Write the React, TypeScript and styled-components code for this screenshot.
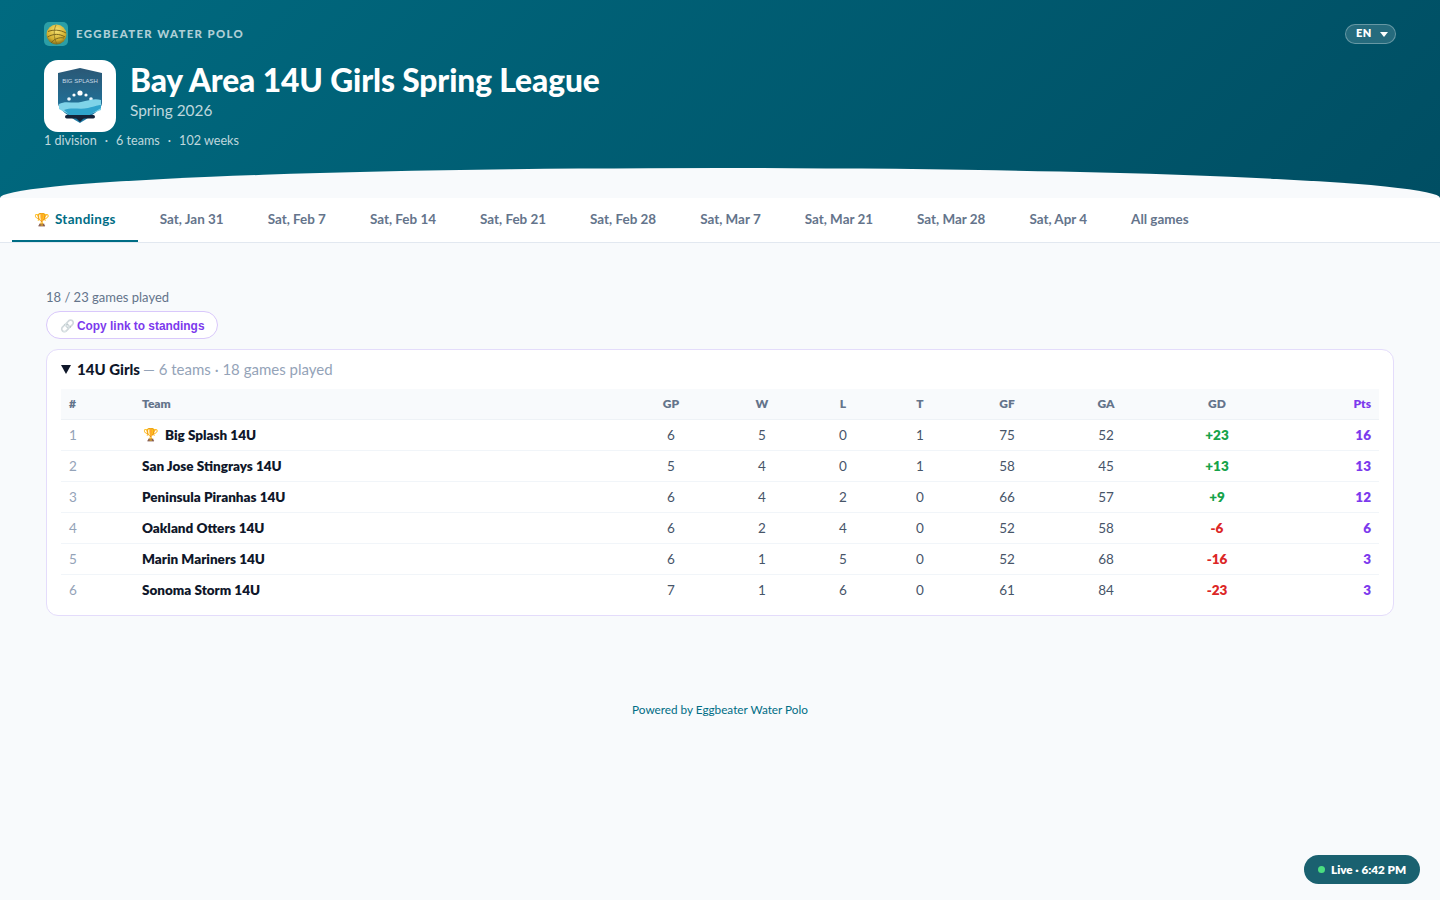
import React from "react";
import styled, { createGlobalStyle } from "styled-components";

const FONT = `Lato, "Noto Sans", "Liberation Sans", sans-serif`;

const Global = createGlobalStyle`
  html, body { margin: 0; padding: 0; background: #f8fafc; }
  body { font-family: ${FONT}; color: #0f172a; min-height: 900px; }
  * { box-sizing: border-box; }
`;

const Page = styled.div`
  min-height: 900px;
  display: flex;
  flex-direction: column;
`;

const Hero = styled.header`
  position: relative;
  height: 198px;
  padding: 22px 44px 0;
  background: linear-gradient(135deg, #006a80 0%, #004e63 100%);
  color: #fff;
  overflow: hidden;
  &::after {
    content: "";
    position: absolute;
    left: 0;
    right: 0;
    bottom: 0;
    height: 30px;
    background: #f8fafc;
    border-radius: 50% 50% 0 0 / 100% 100% 0 0;
  }
`;

const BrandRow = styled.div`
  display: flex;
  align-items: center;
  justify-content: space-between;
  height: 24px;
`;

const Brand = styled.div`
  display: flex;
  align-items: center;
  gap: 8px;
  font-size: 11.4px;
  line-height: 22px;
  font-weight: 900;
  letter-spacing: 1.35px;
  color: rgba(255, 255, 255, 0.7);
`;

const BrandText = styled.span`
  margin-top: -1px;
`;

const LangPill = styled.button`
  display: flex;
  align-items: center;
  gap: 8px;
  width: 51px;
  height: 20px;
  padding: 0 0 4px 10px;
  border: 1px solid rgba(255, 255, 255, 0.3);
  border-radius: 10px;
  background: rgba(255, 255, 255, 0.15);
  color: #fff;
  font: 800 11px ${FONT};
  letter-spacing: 0.4px;
`;

const Caret = styled.span`
  width: 0;
  height: 0;
  margin-top: 4px;
  border-left: 4.5px solid transparent;
  border-right: 4.5px solid transparent;
  border-top: 5px solid #fff;
`;

const TitleRow = styled.div`
  display: flex;
  align-items: flex-start;
  gap: 14px;
  margin-top: 14px;
`;

const Crest = styled.div`
  width: 72px;
  height: 72px;
  border-radius: 14px;
  background: #fff;
  display: flex;
  align-items: center;
  justify-content: center;
`;

const TitleBlock = styled.div`
  padding-top: 1px;
`;

const Title = styled.h1`
  margin: 0;
  font-size: 31.7px;
  line-height: 38px;
  font-weight: 900;
  letter-spacing: -0.1px;
  color: #fff;
`;

const Season = styled.div`
  margin-top: 1px;
  font-size: 15.4px;
  line-height: 20px;
  color: rgba(255, 255, 255, 0.75);
`;

const Meta = styled.div`
  display: flex;
  gap: 8px;
  margin-top: 0;
  font-size: 12.6px;
  line-height: 18px;
  color: rgba(255, 255, 255, 0.75);
`;

const Nav = styled.nav`
  display: flex;
  height: 45px;
  padding-left: 12px;
  background: #fff;
  border-bottom: 1px solid #e2e8f0;
`;

const Tab = styled.a<{ $active?: boolean }>`
  display: flex;
  align-items: center;
  gap: 5px;
  height: 44px;
  padding: 0 22px;
  font-size: 13.45px;
  font-weight: 700;
  white-space: nowrap;
  letter-spacing: ${(p) => (p.$active ? "0.3px" : "0")};
  color: ${(p) => (p.$active ? "#006d85" : "#64748b")};
  border-bottom: 2px solid ${(p) => (p.$active ? "#006d85" : "transparent")};
`;

const TabEmoji = styled.span`
  font-size: 12.5px;
  letter-spacing: 0;
`;

const Main = styled.main`
  padding: 45px 46px 0;
`;

const Played = styled.div`
  font-size: 13px;
  line-height: 18px;
  color: #64748b;
`;

const CopyButton = styled.button`
  display: flex;
  align-items: center;
  gap: 2px;
  height: 28px;
  margin-top: 5px;
  padding: 1px 12px 0 13px;
  border: 1px solid #d9c8fb;
  border-radius: 14px;
  background: #fff;
  color: #7c3aed;
  font: 700 11.9px "Liberation Sans", Arial, sans-serif;
`;

const LinkGlyph = styled.span`
  font-size: 12px;
  opacity: 0.45;
  filter: grayscale(0.6);
`;

const Card = styled.section`
  margin-top: 10px;
  height: 267px;
  padding: 8px 14px 0;
  background: #fff;
  border: 1px solid #e4dcfb;
  border-radius: 12px;
`;

const CardHead = styled.div`
  display: flex;
  align-items: center;
  height: 24px;
  padding-bottom: 2px;
  margin-bottom: 7px;
  font-size: 15px;
  white-space: pre;
  color: #94a3b8;
`;

const Disclosure = styled.span`
  width: 0;
  height: 0;
  margin-right: 6px;
  border-left: 5px solid transparent;
  border-right: 5px solid transparent;
  border-top: 9px solid #0f172a;
`;

const Division = styled.strong`
  font-weight: 900;
  color: #0f172a;
  margin-right: 3px;
`;

const Table = styled.table`
  width: 100%;
  table-layout: fixed;
  border-collapse: collapse;
`;

const HeadCell = styled.th<{ $align?: string; $color?: string }>`
  height: 30px;
  padding: 0 8px;
  font-size: 12px;
  font-weight: 800;
  background: #f8fafc;
  border-bottom: 1px solid #eef2f6;
  text-align: ${(p) => p.$align || "center"};
  color: ${(p) => p.$color || "#64748b"};
`;

const Row = styled.tr`
  height: 31px;
  border-bottom: 1px solid #f1f5f9;
  &:last-child { border-bottom: none; }
`;

const Cell = styled.td<{ $align?: string; $color?: string; $bold?: boolean }>`
  padding: 0 8px;
  font-size: 13.5px;
  text-align: ${(p) => p.$align || "center"};
  color: ${(p) => p.$color || "#475569"};
  font-weight: ${(p) => (p.$bold ? 800 : 400)};
`;

const TeamName = styled.span`
  display: inline-flex;
  align-items: center;
  gap: 6px;
  font-weight: 800;
  color: #0f172a;
`;

const RowEmoji = styled.span`
  font-size: 12.5px;
  padding-left: 1px;
`;

const Footer = styled.footer`
  margin-top: 86px;
  text-align: center;
  font-size: 11.75px;
  line-height: 16px;
  color: #006d85;
`;

const LiveBadge = styled.div`
  position: fixed;
  right: 20px;
  bottom: 16px;
  display: flex;
  align-items: center;
  gap: 6px;
  width: 116px;
  height: 29px;
  padding: 0 0 1px 14px;
  border-radius: 15px;
  background: #1a6170;
  color: #fff;
  font-size: 11.7px;
  font-weight: 800;
`;

const LiveDot = styled.span`
  width: 7px;
  height: 7px;
  border-radius: 50%;
  background: #4ade80;
`;

const BallLogo = () => (
  <svg width="24" height="24" viewBox="0 0 24 24">
    <defs>
      <radialGradient id="ballFill" cx="0.5" cy="0.3" r="0.8">
        <stop offset="0" stopColor="#f6e272" />
        <stop offset="0.6" stopColor="#d2ae2e" />
        <stop offset="1" stopColor="#4f4c1a" />
      </radialGradient>
    </defs>
    <rect width="24" height="24" rx="5" fill="#2b9fa6" />
    <circle cx="12.5" cy="12.5" r="10" fill="url(#ballFill)" />
    <path d="M4 9.500c5-2 12-2 18 1.500M3.500 15c6-3.500 12-3.500 17.500 0M7 21c3-4 8-6 13-5" fill="none" stroke="#6e5c18" strokeWidth="0.9" />
    <path d="M12 3c-2.500 5-2.500 13 1 19" fill="none" stroke="#7d6a1c" strokeWidth="0.7" />
  </svg>
);

const CrestLogo = () => (
  <svg width="48" height="56" viewBox="0 0 48 56">
    <defs>
      <linearGradient id="shieldFill" x1="0" y1="0" x2="0" y2="1">
        <stop offset="0" stopColor="#2a5876" />
        <stop offset="1" stopColor="#1c7ba6" />
      </linearGradient>
    </defs>
    <path d="M24 0 46 5V35C46 42 32 50 24 55 16 50 2 42 2 35V5Z" fill="url(#shieldFill)" />
    <text x="24" y="15" textAnchor="middle" fontSize="6" fontFamily="Liberation Sans, sans-serif" fill="#c5d9e6">BIG SPLASH</text>
    <circle cx="24" cy="25" r="2.600" fill="#fff" />
    <circle cx="18" cy="27" r="1.600" fill="#fff" />
    <circle cx="30" cy="27" r="1.600" fill="#fff" />
    <circle cx="13" cy="31" r="1.800" fill="#eaf4fa" />
    <circle cx="35" cy="31" r="1.800" fill="#eaf4fa" />
    <path d="M3 36c7-4 14 0 22-2s14-4 20-2V42L32 47H14L3 41Z" fill="#7fd3e8" />
    <path d="M8 42c8-3 16 0 24-2s10-3 13-3v3L30 49H16Z" fill="#2fa3cc" />
    <rect x="9" y="47" width="30" height="3.500" rx="1.700" fill="#14233a" />
    <path d="M20 50h8l-4 4Z" fill="#14233a" />
  </svg>
);

const headers: { label: string; w: number; align?: string; color?: string }[] = [
  { label: "#", w: 73, align: "left" },
  { label: "Team", w: 496, align: "left" },
  { label: "GP", w: 82 },
  { label: "W", w: 100 },
  { label: "L", w: 62 },
  { label: "T", w: 92 },
  { label: "GF", w: 82 },
  { label: "GA", w: 116 },
  { label: "GD", w: 106 },
  { label: "Pts", w: 109, align: "right", color: "#7c3aed" },
];

const rows = [
  ["Big Splash 14U", 6, 5, 0, 1, 75, 52, "+23", 16],
  ["San Jose Stingrays 14U", 5, 4, 0, 1, 58, 45, "+13", 13],
  ["Peninsula Piranhas 14U", 6, 4, 2, 0, 66, 57, "+9", 12],
  ["Oakland Otters 14U", 6, 2, 4, 0, 52, 58, "-6", 6],
  ["Marin Mariners 14U", 6, 1, 5, 0, 52, 68, "-16", 3],
  ["Sonoma Storm 14U", 7, 1, 6, 0, 61, 84, "-23", 3],
] as const;

const tabs = ["Sat, Jan 31", "Sat, Feb 7", "Sat, Feb 14", "Sat, Feb 21", "Sat, Feb 28", "Sat, Mar 7", "Sat, Mar 21", "Sat, Mar 28", "Sat, Apr 4", "All games"];

export default function App() {
  return (
    <Page>
      <Global />
      <Hero>
        <BrandRow>
          <Brand><BallLogo /><BrandText>EGGBEATER WATER POLO</BrandText></Brand>
          <LangPill>EN<Caret /></LangPill>
        </BrandRow>
        <TitleRow>
          <Crest><CrestLogo /></Crest>
          <TitleBlock>
            <Title>Bay Area 14U Girls Spring League</Title>
            <Season>Spring 2026</Season>
          </TitleBlock>
        </TitleRow>
        <Meta><span>1 division</span><span>·</span><span>6 teams</span><span>·</span><span>102 weeks</span></Meta>
      </Hero>
      <Nav>
        <Tab $active><TabEmoji>🏆</TabEmoji>Standings</Tab>
        {tabs.map((t) => <Tab key={t}>{t}</Tab>)}
      </Nav>
      <Main>
        <Played>18 / 23 games played</Played>
        <CopyButton><LinkGlyph>🔗</LinkGlyph>Copy link to standings</CopyButton>
        <Card>
          <CardHead><Disclosure /><Division>14U Girls</Division>— 6 teams · 18 games played</CardHead>
          <Table>
            <colgroup>{headers.map((h) => <col key={h.label} style={{ width: h.w }} />)}</colgroup>
            <thead>
              <tr>{headers.map((h) => <HeadCell key={h.label} $align={h.align} $color={h.color}>{h.label}</HeadCell>)}</tr>
            </thead>
            <tbody>
              {rows.map((r, i) => {
                const [name, gp, w, l, t, gf, ga, gd, pts] = r;
                return (
                  <Row key={name}>
                    <Cell $align="left" $color="#94a3b8">{i + 1}</Cell>
                    <Cell $align="left"><TeamName>{i === 0 && <RowEmoji>🏆</RowEmoji>}{name}</TeamName></Cell>
                    <Cell>{gp}</Cell><Cell>{w}</Cell><Cell>{l}</Cell><Cell>{t}</Cell><Cell>{gf}</Cell><Cell>{ga}</Cell>
                    <Cell $bold $color={gd.startsWith("+") ? "#16a34a" : "#dc2626"}>{gd}</Cell>
                    <Cell $bold $align="right" $color="#7c3aed">{pts}</Cell>
                  </Row>
                );
              })}
            </tbody>
          </Table>
        </Card>
        <Footer>Powered by Eggbeater Water Polo</Footer>
      </Main>
      <LiveBadge><LiveDot />Live · 6:42 PM</LiveBadge>
    </Page>
  );
}
